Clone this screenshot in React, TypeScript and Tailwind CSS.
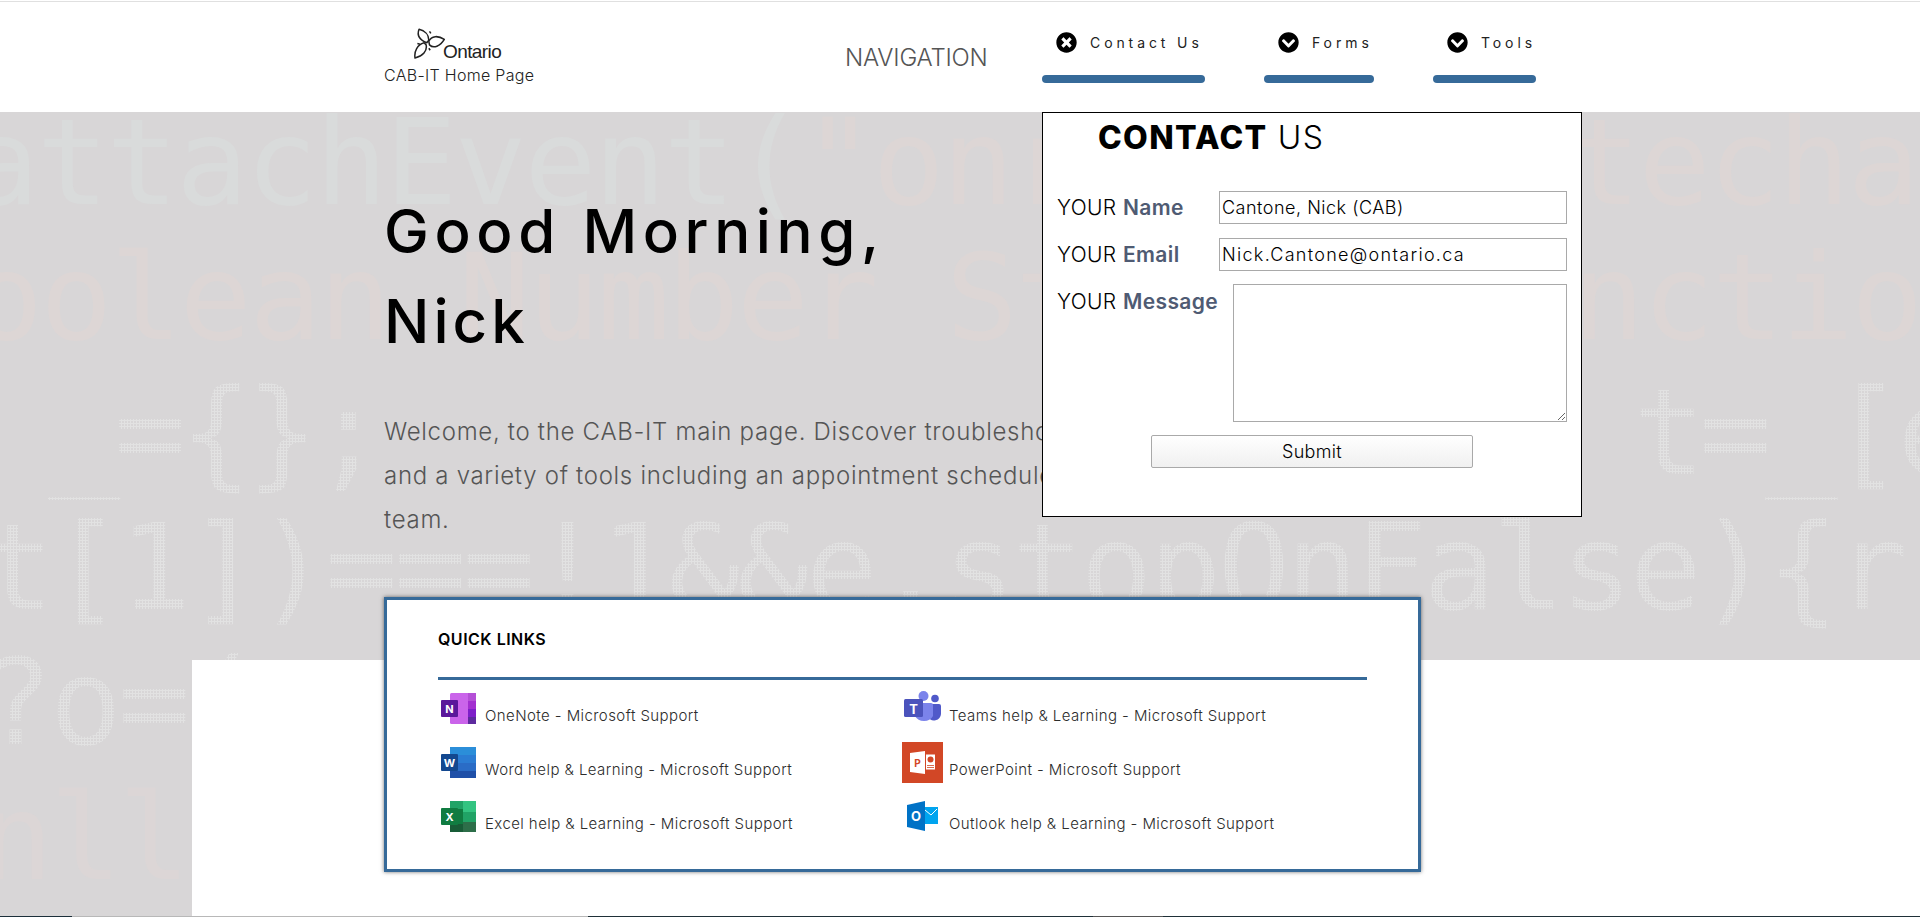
import { FaChevronCircleDown, FaTimesCircle } from "react-icons/fa";

const NAV_ITEMS = [
  { label: "Contact Us", open: true, widthClass: "w-[163px]" },
  { label: "Forms", open: false, widthClass: "w-[110px] ml-[59px]" },
  { label: "Tools", open: false, widthClass: "w-[103px] ml-[59px]" },
];

const LINKS_LEFT = [
  { label: "OneNote - Microsoft Support", icon: <OneNoteIcon /> },
  { label: "Word help & Learning - Microsoft Support", icon: <WordIcon /> },
  { label: "Excel help & Learning - Microsoft Support", icon: <ExcelIcon /> },
];

const LINKS_RIGHT = [
  { label: "Teams help & Learning - Microsoft Support", icon: <TeamsIcon /> },
  { label: "PowerPoint - Microsoft Support", icon: <PowerPointIcon /> },
  { label: "Outlook help & Learning - Microsoft Support", icon: <OutlookIcon /> },
];

// dotted look of the faded code picture behind the hero
const DOTS_GREY =
  "bg-clip-text text-transparent bg-[radial-gradient(circle,#e2e2e2_1.2px,transparent_1.3px)] bg-[length:3px_3px]";

function Trillium() {
  return (
    <svg viewBox="40 26 95 95" className="h-[32px] w-[32px]" fill="#fff" stroke="#222" strokeWidth="4.5" strokeLinejoin="round">
      <path d="M78 70C58 62 48 48 55 30C72 34 84 46 84 62Z" />
      <path d="M84 66C92 48 112 48 130 60C118 80 98 88 86 76Z" />
      <path d="M76 76C80 94 66 110 43 115C40 95 50 76 70 70Z" />
      <path d="M58 74L50 72M90 42L86 36M88 92L84 86" />
    </svg>
  );
}

function OneNoteIcon() {
  return (
    <svg viewBox="0 0 35 31" className="h-[31px] w-[35px]">
      <rect x="9" width="26" height="31" rx="1.5" fill="#ca64ea" />
      <rect x="27" width="8" height="8" fill="#b44fd6" />
      <rect x="27" y="8" width="8" height="8" fill="#a32fd0" />
      <rect x="27" y="16" width="8" height="8" fill="#7e1fc9" />
      <rect x="27" y="24" width="8" height="7" fill="#5d2a9e" />
      <rect y="7" width="17" height="17" rx="1" fill="#5a189a" />
      <text x="8.5" y="20" textAnchor="middle" fontFamily="Inter, sans-serif" fontWeight="700" fontSize="11" fill="#fff">N</text>
    </svg>
  );
}

function WordIcon() {
  return (
    <svg viewBox="0 0 35 31" className="h-[31px] w-[35px]">
      <rect x="9" width="26" height="8" fill="#2b8ed9" />
      <rect x="9" y="8" width="26" height="8" fill="#2b7cd3" />
      <rect x="9" y="16" width="26" height="8" fill="#2a6cc6" />
      <rect x="9" y="24" width="26" height="7" fill="#1f50a8" />
      <rect y="7" width="17" height="17" rx="1" fill="#13488f" />
      <text x="8.5" y="20" textAnchor="middle" fontFamily="Inter, sans-serif" fontWeight="700" fontSize="11" fill="#fff">W</text>
    </svg>
  );
}

function ExcelIcon() {
  return (
    <svg viewBox="0 0 35 31" className="h-[31px] w-[35px]">
      <rect x="9" width="13" height="8" fill="#21a366" />
      <rect x="22" width="13" height="11" fill="#33c481" />
      <rect x="9" y="8" width="13" height="15" fill="#107c41" />
      <rect x="22" y="11" width="13" height="10" fill="#21a366" />
      <rect x="9" y="23" width="13" height="8" fill="#185c37" />
      <rect x="22" y="21" width="13" height="10" fill="#2d6e49" />
      <rect y="7" width="17" height="17" rx="1" fill="#107c41" />
      <text x="8.5" y="20" textAnchor="middle" fontFamily="Inter, sans-serif" fontWeight="700" fontSize="11" fill="#fff">X</text>
    </svg>
  );
}

function TeamsIcon() {
  return (
    <svg viewBox="0 0 37 34" className="ml-[2px] h-[34px] w-[37px]">
      <circle cx="31" cy="7.5" r="3.8" fill="#5059c9" />
      <path d="M24 13h11a2 2 0 0 1 2 2v8a7 7 0 0 1-13 3Z" fill="#5059c9" />
      <circle cx="19.5" cy="5" r="5" fill="#7b83eb" />
      <path d="M11 12h16a2 2 0 0 1 2 2v11a10 9 0 0 1-18 0Z" fill="#7b83eb" />
      <rect y="8" width="19" height="18" rx="1.5" fill="#4b53bc" />
      <text x="9.5" y="22.5" textAnchor="middle" fontFamily="Inter, sans-serif" fontWeight="700" fontSize="13" fill="#fff">T</text>
    </svg>
  );
}

function PowerPointIcon() {
  return (
    <svg viewBox="0 0 41 41" className="h-[41px] w-[41px]">
      <rect width="41" height="41" fill="#d24726" />
      <path d="M8 11L23 9V32L8 30Z" fill="#fff" />
      <rect x="24" y="12.5" width="9" height="15" fill="#fff" />
      <path d="M25 23.5H32M25 25.5H32" stroke="#d24726" strokeWidth="0.8" />
      <circle cx="28.5" cy="17.5" r="3" fill="#d24726" />
      <text x="15.5" y="24.5" textAnchor="middle" fontFamily="Inter, sans-serif" fontWeight="700" fontSize="10" fill="#d24726">P</text>
    </svg>
  );
}

function OutlookIcon() {
  return (
    <svg viewBox="0 0 31 30" className="ml-[5px] h-[30px] w-[31px]">
      <path d="M15 6H31V23H15Z" fill="#00a4ef" />
      <path d="M18 9L24 14L30 8" fill="none" stroke="#fff" strokeWidth="1" />
      <path d="M0 4L18 0V30L0 26Z" fill="#0072c6" />
      <text x="9" y="20" textAnchor="middle" fontFamily="Inter, sans-serif" fontWeight="700" fontSize="13" fill="#fff">O</text>
    </svg>
  );
}

function CodeBackdrop() {
  return (
    <div className="absolute inset-0 overflow-hidden whitespace-pre font-['DejaVu_Sans_Mono',monospace] text-[120px] leading-[135px]">
      <div className="-ml-[33px] -mt-[17px] tracking-[-2.6px] text-[#ddd6d5]">
        <span className="text-[#d9dbdb]">attachEvent(</span>"onreadystatechange
      </div>
      <div className="-ml-[99px] tracking-[-2.6px] text-[#ddd6d5]">Boolean Number String Function</div>
      <div className={`ml-[48px] tracking-[-6.2px] ${DOTS_GREY}`}>{"_={};                   t=_[e"}</div>
      <div className={`-ml-[18px] tracking-[-3.6px] ${DOTS_GREY}`}>{"t[1])===!1&&e.stopOnFalse){r"}</div>
      <div className={`-ml-[19px] tracking-[-3.6px] ${DOTS_GREY}`}>{"?o=("}</div>
      <div className="-ml-[19px] tracking-[-3.6px] text-[#dcd6d6]">nlll</div>
    </div>
  );
}

function NavItem({ label, open, widthClass }: (typeof NAV_ITEMS)[number]) {
  const Icon = open ? FaTimesCircle : FaChevronCircleDown;
  return (
    <div className={`flex flex-col ${widthClass}`}>
      <div className="ml-[14px] flex h-[21px] items-center gap-[13px]">
        <Icon className="h-[21px] w-[21px] text-black" />
        <span className="text-[14px] tracking-[3.9px] text-[#222]">{label}</span>
      </div>
      <div className="mt-[22px] h-[8px] rounded-full bg-[#366a99]" />
    </div>
  );
}

function FormLabel({ strong }: { strong: string }) {
  return (
    <span className="text-[21px] font-light tracking-[0.4px] text-black">
      YOUR <span className="font-semibold text-[#4f5b73]">{strong}</span>
    </span>
  );
}

function ContactPanel() {
  return (
    <div className="absolute left-[1042px] top-[112px] z-20 h-[405px] w-[540px] border border-black bg-white">
      <h2 className="ml-[55px] mt-[5px] h-[40px] text-[32px] font-light leading-[40px] tracking-[1.3px] text-black">
        <span className="font-extrabold">CONTACT</span> US
      </h2>
      <div className="ml-[14px] mr-[14px] mt-[33px] flex flex-col">
        <div className="flex h-[33px] items-center justify-between">
          <FormLabel strong="Name" />
          <input
            readOnly
            defaultValue="Cantone, Nick (CAB)"
            className="h-[33px] w-[348px] border border-[#a9a9a9] px-[2px] text-[18px] font-light tracking-[0.5px] text-black outline-none"
          />
        </div>
        <div className="mt-[14px] flex h-[33px] items-center justify-between">
          <FormLabel strong="Email" />
          <input
            readOnly
            defaultValue="Nick.Cantone@ontario.ca"
            className="h-[33px] w-[348px] border border-[#a9a9a9] px-[2px] text-[18px] font-light tracking-[1.3px] text-black outline-none"
          />
        </div>
        <div className="mt-[13px] flex items-start justify-between">
          <div className="mt-[2px]">
            <FormLabel strong="Message" />
          </div>
          <textarea className="h-[138px] w-[334px] border border-[#a9a9a9] outline-none" />
        </div>
        <button className="ml-[94px] mt-[13px] h-[33px] w-[322px] rounded-[2px] border border-[#a9a9a9] bg-gradient-to-b from-white to-[#f0f0f0] text-[18px] font-light tracking-[0.3px] text-black">
          Submit
        </button>
      </div>
    </div>
  );
}

function LinkColumn({ links, className, iconWidth }: { links: typeof LINKS_LEFT; className: string; iconWidth: string }) {
  return (
    <div className={`flex flex-col ${className}`}>
      {links.map((l) => (
        <div key={l.label} className="flex h-[54px] items-center pt-[14px]">
          <div className={`mb-[16px] flex items-center ${iconWidth}`}>{l.icon}</div>
          <span className="text-[15px] font-light tracking-[0.42px] text-[#2c2c2c]">{l.label}</span>
        </div>
      ))}
    </div>
  );
}

function QuickLinks() {
  return (
    <div className="relative z-10 -mt-[63px] h-[275px] w-[1037px] border-[3px] border-[#366a99] bg-white pl-[51px] pr-[51px] shadow-[0_0_4px_rgba(0,0,0,0.55)]">
      <h3 className="mt-[29px] h-[20px] text-[16px] font-semibold leading-[20px] tracking-[0.5px] text-black">QUICK LINKS</h3>
      <div className="mt-[28px] h-[3px] bg-[#366a99]" />
      <div className="mt-[2px] flex">
        <LinkColumn links={LINKS_LEFT} className="w-[464px] pl-[3px]" iconWidth="w-[44px]" />
        <LinkColumn links={LINKS_RIGHT} className="flex-1" iconWidth="w-[47px]" />
      </div>
    </div>
  );
}

export default function App() {
  return (
    <div className="relative flex h-[917px] w-full flex-col overflow-hidden font-['Inter',sans-serif]">
      <header className="mt-[1px] -mb-[1px] flex h-[112px] shrink-0 border-t border-[#e0e0e0] bg-white pl-[384px]">
        <div className="mt-[26px] w-[461px]">
          <div className="ml-[30px] flex items-end">
            <Trillium />
            <span className="-ml-[3px] mb-[-2px] font-['Liberation_Sans',sans-serif] text-[19px] leading-[20px] tracking-[-0.6px] text-[#222]">
              Ontario
            </span>
          </div>
          <p className="mt-[4px] text-[16px] font-light leading-[22px] tracking-[0.3px] text-[#222]">CAB-IT Home Page</p>
        </div>
        <div className="mt-[41px] w-[197px] text-[24px] font-light leading-[30px] tracking-[-0.2px] text-[#555]">NAVIGATION</div>
        <nav className="mt-[30px] flex items-start">
          {NAV_ITEMS.map((n) => (
            <NavItem key={n.label} {...n} />
          ))}
        </nav>
      </header>
      <main className="relative flex flex-1 flex-col bg-[#d8d6d7]">
        <CodeBackdrop />
        <section className="relative h-[548px] shrink-0 pl-[384px] pt-[74px]">
          <h1 className="text-[60px] font-medium leading-[90px] text-black">
            <span className="tracking-[5.6px]">Good Morning,</span>
            <br />
            <span className="tracking-[4px]">Nick</span>
          </h1>
          <p className="mt-[44px] text-[24px] font-light leading-[44px] tracking-[0.7px] text-[#555]">
            Welcome, to the CAB-IT main page. Discover troubleshooting
            <br />
            and a variety of tools including an appointment scheduler
            <br />
            team.
          </p>
        </section>
        <section className="relative flex flex-1">
          <div className="w-[192px] shrink-0" />
          <div className="flex-1 bg-white pl-[192px]">
            <QuickLinks />
          </div>
        </section>
        <div className="relative flex h-[1px] shrink-0">
          <div className="w-[72px] bg-[#1c2f3a]" />
          <div className="w-[516px] bg-[#b8b8b8]" />
          <div className="w-[505px] bg-[#1f3038]" />
          <div className="w-[70px] bg-[#555555]" />
          <div className="flex-1 bg-[#1f3038]" />
        </div>
      </main>
      <ContactPanel />
    </div>
  );
}
